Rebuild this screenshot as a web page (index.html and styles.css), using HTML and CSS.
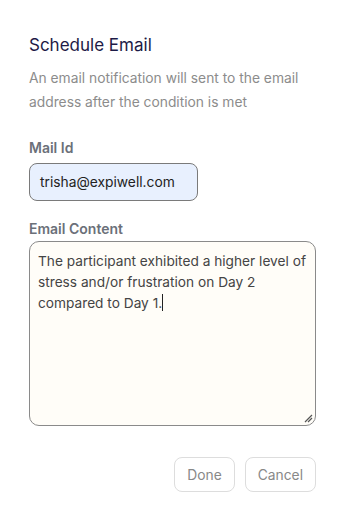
FILE: index.html
```html
<!DOCTYPE html>
<html>
<head>
<meta charset="utf-8">
<link rel="stylesheet" href="styles.css">
</head>
<body>
<div class="dialog">
  <h1 class="title">Schedule Email</h1>
  <p class="desc">An email notification will sent to the email address after the condition is met</p>
  <label class="label">Mail Id</label>
  <div class="input">trisha@expiwell.com</div>
  <label class="label label-content">Email Content</label>
  <div class="textarea">The participant exhibited a higher level of stress and/or frustration on Day 2 compared to Day 1.<span class="caret"></span>
    <svg class="grip" width="10" height="10" viewBox="0 0 10 10"><path d="M2 9 L9 2 M5 9 L9 5" stroke="#555" stroke-width="1.2" fill="none"/></svg>
  </div>
  <div class="actions">
    <button class="btn">Done</button>
    <button class="btn">Cancel</button>
  </div>
</div>
</body>
</html>
```
FILE: styles.css
```css
html, body { margin: 0; padding: 0; background: #fff; }
body { width: 346px; height: 508px; font-family: Inter, "Noto Sans", sans-serif; }
.dialog { padding: 34px 30px 0 29px; display: flex; flex-direction: column; }
.title { margin: 0; font-size: 17px; font-weight: 400; color: #1d1a46; line-height: 22px; }
.desc { margin: 10px 0 0; font-size: 13.8px; line-height: 24px; color: #8c8c8c; }
.label { display: block; margin-top: 25px; font-size: 14px; font-weight: 600; color: #6b7079; line-height: 18px; }
.label-content { margin-top: 19px; }
.input { margin-top: 6px; width: 147px; height: 36px; box-sizing: content-box; border: 1px solid #7a7a7a; border-radius: 8px; background: #e8f0fe; font-size: 13.8px; color: #222; line-height: 36px; padding: 0 10px; }
.textarea { position: relative; margin-top: 3px; height: 169px; border: 1px solid #8a8a8a; border-radius: 10px; background: #fffdf8; padding: 9px 8px 5px 8px; font-size: 13.7px; line-height: 21px; color: #444; }
.caret { display: inline-block; width: 1px; height: 17px; background: #222; vertical-align: -3px; }
.grip { position: absolute; right: 2px; bottom: 2px; }
.actions { display: flex; justify-content: flex-end; gap: 10px; margin-top: 31px; }
.btn { height: 35px; border: 1px solid #ddd; border-radius: 8px; background: #fff; font-family: Inter, sans-serif; font-size: 13.8px; color: #888; padding: 0 12px; }
```
